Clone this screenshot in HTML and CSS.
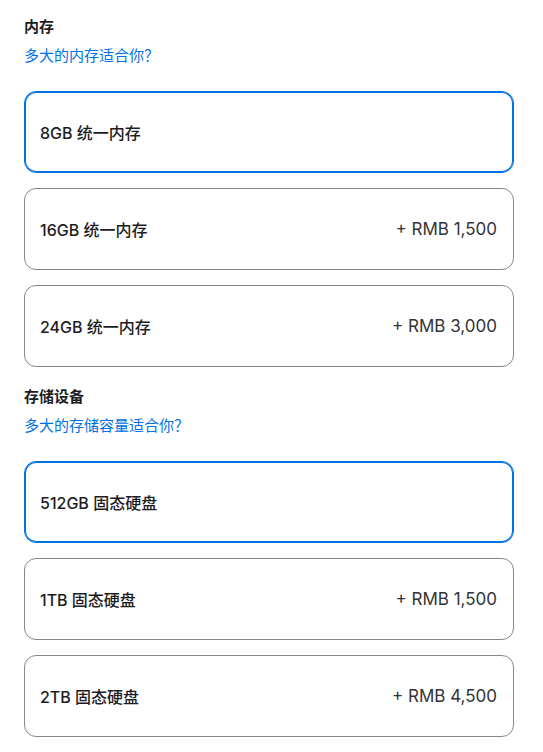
FILE: index.html
```html
<!DOCTYPE html>
<html lang="zh-CN">
<head>
  <meta charset="UTF-8">
  <meta name="viewport" content="width=device-width, initial-scale=1.0">
  <title>配置选项</title>
  <link rel="stylesheet" href="styles.css">
</head>
<body>
  <div class="page">
    <!-- 内存 -->
    <section class="option-group">
      <h3 class="group-title">内存</h3>
      <a class="group-help" href="#">多大的内存适合你？</a>
      <div class="options">
        <label class="option selected">
          <span class="option-name">8GB 统一内存</span>
        </label>
        <label class="option">
          <span class="option-name">16GB 统一内存</span>
          <span class="option-price">+ RMB 1,500</span>
        </label>
        <label class="option">
          <span class="option-name">24GB 统一内存</span>
          <span class="option-price">+ RMB 3,000</span>
        </label>
      </div>
    </section>

    <!-- 存储设备 -->
    <section class="option-group">
      <h3 class="group-title">存储设备</h3>
      <a class="group-help" href="#">多大的存储容量适合你？</a>
      <div class="options">
        <label class="option selected">
          <span class="option-name">512GB 固态硬盘</span>
        </label>
        <label class="option">
          <span class="option-name">1TB 固态硬盘</span>
          <span class="option-price">+ RMB 1,500</span>
        </label>
        <label class="option">
          <span class="option-name">2TB 固态硬盘</span>
          <span class="option-price">+ RMB 4,500</span>
        </label>
      </div>
    </section>
  </div>
</body>
</html>
```

FILE: styles.css
```css
/* Global Styles */
body {
  margin: 0;
  padding: 0;
  background: #ffffff;
  color: #1d1d1f;
  font-family: Inter, "Noto Sans CJK SC", sans-serif;
}

.page {
  width: 490px;
  margin-left: 24px;
  padding-top: 17px;
}

.option-group + .option-group {
  margin-top: 20px;
}

.group-title {
  margin: 0 0 9px;
  font-size: 15px;
  line-height: 20px;
  font-weight: 600;
  color: #1d1d1f;
}

.group-help {
  display: block;
  margin-bottom: 25px;
  font-size: 15px;
  line-height: 20px;
  color: #0071e3;
  text-decoration: none;
}

/* Option cards */
.options {
  display: flex;
  flex-direction: column;
  gap: 15px;
}

.option {
  display: flex;
  align-items: center;
  justify-content: space-between;
  height: 82px;
  box-sizing: border-box;
  padding: 0 16px 0 15px;
  border: 1px solid #86868b;
  border-radius: 12px;
  cursor: pointer;
}

.option.selected {
  border-color: #0071e3;
  box-shadow: inset 0 0 0 1px #0071e3;
}

.option-name {
  font-size: 16px;
  font-weight: 500;
  color: #1d1d1f;
}

.option-price {
  font-size: 17px;
  font-weight: 400;
  color: #333336;
}
```
